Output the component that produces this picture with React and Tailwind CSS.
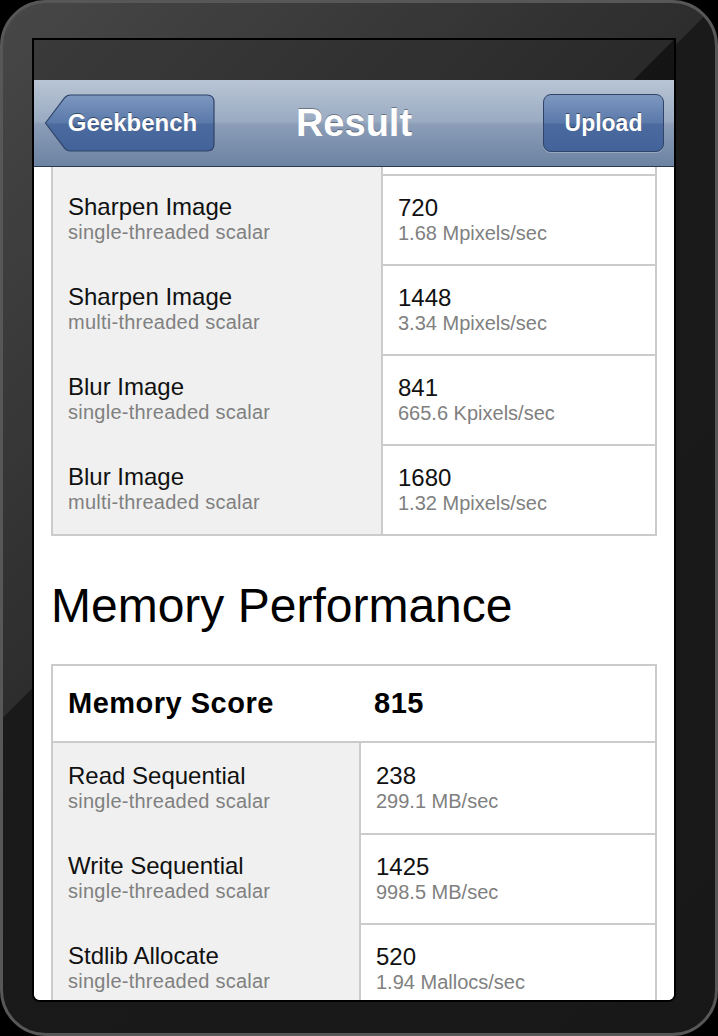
import React from 'react';

const imageRows = [
  { name: 'Sharpen Image', kind: 'single-threaded scalar', score: '720', rate: '1.68 Mpixels/sec' },
  { name: 'Sharpen Image', kind: 'multi-threaded scalar', score: '1448', rate: '3.34 Mpixels/sec' },
  { name: 'Blur Image', kind: 'single-threaded scalar', score: '841', rate: '665.6 Kpixels/sec' },
  { name: 'Blur Image', kind: 'multi-threaded scalar', score: '1680', rate: '1.32 Mpixels/sec' },
];

const memoryRows = [
  { name: 'Read Sequential', kind: 'single-threaded scalar', score: '238', rate: '299.1 MB/sec' },
  { name: 'Write Sequential', kind: 'single-threaded scalar', score: '1425', rate: '998.5 MB/sec' },
  { name: 'Stdlib Allocate', kind: 'single-threaded scalar', score: '520', rate: '1.94 Mallocs/sec' },
];

// one benchmark line: gray label cell on the left, white value cell on the right
const ResultRow = ({ row, leftWidth, topBorder = true }) => (
  <div className={`grid h-[90px] ${leftWidth}`}>
    <div className="flex flex-col justify-center bg-[#f0f0f0] pl-[15px]">
      <div className="text-[24px] leading-[26px] text-[#111]">{row.name}</div>
      <div className="text-[20px] leading-[24px] tracking-[0.25px] text-[#808080]">{row.kind}</div>
    </div>
    <div
      className={`flex flex-col justify-center border-l-2 border-[#cbcbcb] pl-[15px] ${
        topBorder ? 'border-t-2' : ''
      }`}
    >
      <div className="text-[24px] leading-[26px] text-[#111]">{row.score}</div>
      <div className="text-[20px] leading-[24px] text-[#808080]">{row.rate}</div>
    </div>
  </div>
);

const BackButton = () => (
  <button className="relative h-[58px] w-[171px]">
    <svg className="absolute inset-0" width="171" height="58" viewBox="0 0 171 58">
      <defs>
        <linearGradient id="navBtn" x1="0" y1="0" x2="0" y2="1">
          <stop offset="0" stopColor="#7d97bf" />
          <stop offset="0.5" stopColor="#5a79aa" />
          <stop offset="0.52" stopColor="#4b6b9f" />
          <stop offset="1" stopColor="#42629a" />
        </linearGradient>
      </defs>
      <path
        d="M1.5 29 L20.5 3.8 Q22.8 1 26.5 1 H163 Q170 1 170 8 V50 Q170 57 163 57 H26.5 Q22.8 57 20.5 54.2 Z"
        fill="url(#navBtn)"
        stroke="#2f4468"
        strokeWidth="1.2"
      />
    </svg>
    <span className="relative pl-[6px] text-[24px] font-bold text-white [text-shadow:0_-1px_0_rgba(0,0,0,0.45)]">
      Geekbench
    </span>
  </button>
);

const App = () => {
  return (
    <div className="min-h-screen bg-black font-['Liberation_Sans',Arial,sans-serif]">
      <div className="h-[1036px] w-[718px] rounded-[46px] border-[3px] border-[#575757] bg-[linear-gradient(135deg,#474747_0%,#2d2d2d_41%,#1a1a1a_41%,#181818_100%)] pl-[31px] pt-[37px]">
        {/* screen */}
        <div className="flex h-[960px] w-[640px] flex-col overflow-hidden rounded-b-[6px] bg-white ring-2 ring-black">
          {/* status bar */}
          <div className="h-[40px] shrink-0 bg-[linear-gradient(135deg,#3a3a3a_0%,#2a2a2a_94%,#151515_94%,#141414_100%)]" />

          {/* navigation bar */}
          <div className="grid h-[87px] shrink-0 grid-cols-[1fr_auto_1fr] items-center border-b border-[#2b384c] bg-[linear-gradient(to_bottom,#b9c5d5_0%,#9aabc2_48%,#8b9db7_52%,#6c83a3_100%)] px-[10px]">
            <div className="flex justify-start">
              <BackButton />
            </div>
            <div className="text-[38px] font-bold text-white [text-shadow:0_-1px_0_rgba(0,0,0,0.35)]">Result</div>
            <div className="flex justify-end">
              <button className="h-[58px] w-[121px] rounded-[8px] border border-[#2f4468] bg-[linear-gradient(to_bottom,#7d97bf_0%,#5a79aa_50%,#4b6b9f_52%,#42629a_100%)] text-[23px] font-bold text-white shadow-[0_1px_0_rgba(255,255,255,0.25)] [text-shadow:0_-1px_0_rgba(0,0,0,0.45)]">
                Upload
              </button>
            </div>
          </div>

          {/* scrolled content */}
          <div className="flex-1 overflow-hidden bg-white px-[17px]">
            <div className="border-x-2 border-b-2 border-[#cbcbcb]">
              <div className="grid h-[7px] grid-cols-[328px_1fr]">
                <div className="bg-[#f0f0f0]" />
                <div className="border-l-2 border-[#cbcbcb]" />
              </div>
              {imageRows.map((row, i) => (
                <ResultRow key={i} row={row} leftWidth="grid-cols-[328px_1fr]" />
              ))}
            </div>

            <h2 className="mt-[42px] text-[48px] leading-[56px] text-black">Memory Performance</h2>

            <div className="mt-[30px] border-2 border-[#cbcbcb]">
              <div className="grid h-[77px] grid-cols-[306px_1fr] items-center border-b-2 border-[#cbcbcb] text-[29px] font-bold tracking-[0.5px] text-black">
                <div className="pl-[15px]">Memory Score</div>
                <div className="pl-[15px]">815</div>
              </div>
              {memoryRows.map((row, i) => (
                <ResultRow key={i} row={row} leftWidth="grid-cols-[306px_1fr]" topBorder={i > 0} />
              ))}
            </div>
          </div>
        </div>
      </div>
    </div>
  );
};

export default App;
